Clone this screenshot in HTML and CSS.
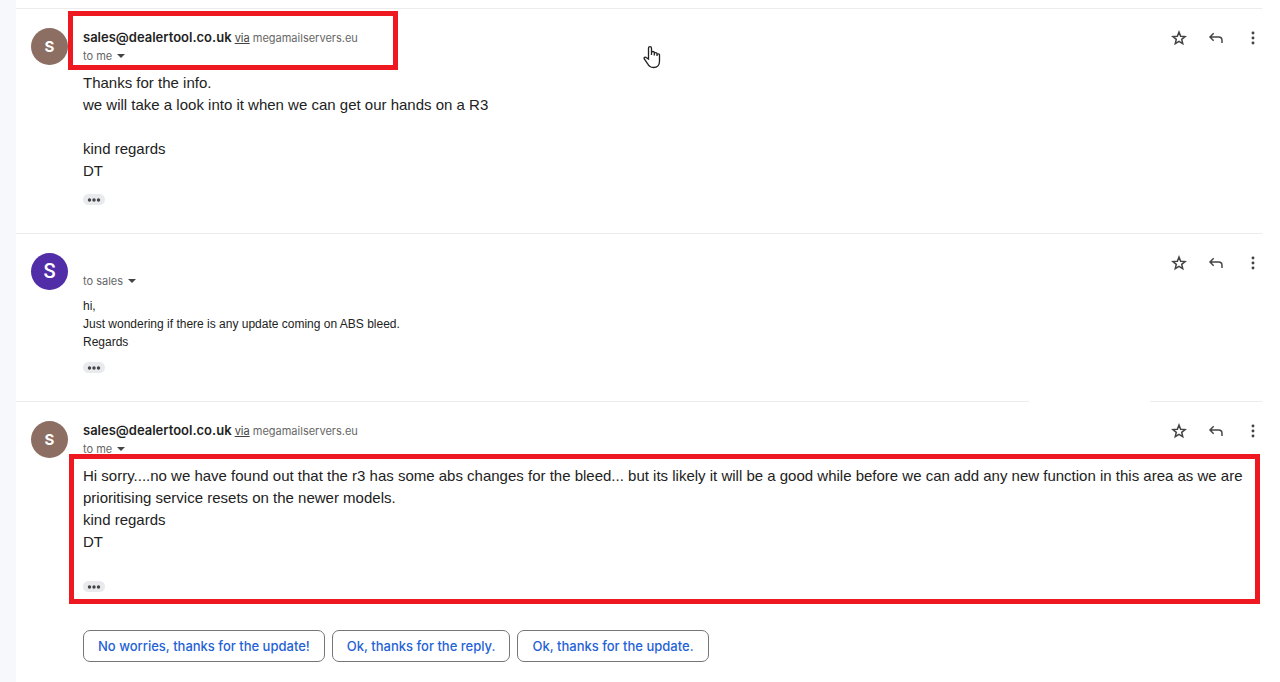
FILE: index.html
```html
<!DOCTYPE html>
<html lang="en">
<head>
  <meta charset="UTF-8" />
  <meta name="viewport" content="width=device-width, initial-scale=1.0"/>
  <title>Mail – sales@dealertool.co.uk</title>
  <link rel="stylesheet" href="styles.css">
</head>
<body>

<!-- Shared icons -->
<svg class="sprite" aria-hidden="true">
  <symbol id="star" viewBox="0 0 24 24">
    <path d="M12 3.2l2.5 6.1 6.6.5-5 4.3 1.5 6.4-5.6-3.4-5.6 3.4 1.5-6.4-5-4.3 6.6-.5z" fill="none" stroke="currentColor" stroke-width="2.3"/>
  </symbol>
  <symbol id="reply" viewBox="0 0 24 24">
    <path d="M8.500 5L3 10.500 8.500 16M3 10.500h13c3 0 5 2 5 5v4" fill="none" stroke="currentColor" stroke-width="2.2"/>
  </symbol>
  <symbol id="more" viewBox="0 0 24 24">
    <circle cx="12" cy="4.5" r="2.2"/><circle cx="12" cy="12" r="2.2"/><circle cx="12" cy="19.5" r="2.2"/>
  </symbol>
  <symbol id="dots" viewBox="0 0 14 4">
    <circle cx="2.500" cy="2" r="1.700"/><circle cx="7" cy="2" r="1.700"/><circle cx="11.500" cy="2" r="1.700"/>
  </symbol>
</svg>

<div class="rail"></div>

<main class="thread">

  <article class="message">
    <div class="avatar">S</div>
    <div class="content">
      <header class="message-header">
        <div class="sender marked">
          <div class="from"><strong>sales@dealertool.co.uk</strong> <a href="#">via</a> <span>megamailservers.eu</span></div>
          <button class="to">to me <i class="caret"></i></button>
        </div>
        <div class="actions">
          <button aria-label="Star"><svg><use href="#star"/></svg></button>
          <button aria-label="Reply"><svg><use href="#reply"/></svg></button>
          <button aria-label="More"><svg><use href="#more"/></svg></button>
        </div>
      </header>
      <div class="body">
        <p>Thanks for the info.<br>we will take a look into it when we can get our hands on a R3<br><br>kind regards<br>DT</p>
        <button class="trimmed" aria-label="Show trimmed content"><svg><use href="#dots"/></svg></button>
      </div>
    </div>
  </article>

  <article class="message">
    <div class="avatar avatar-me">S</div>
    <div class="content">
      <header class="message-header">
        <div class="sender">
          <div class="from"></div>
          <button class="to">to sales <i class="caret"></i></button>
        </div>
        <div class="actions">
          <button aria-label="Star"><svg><use href="#star"/></svg></button>
          <button aria-label="Reply"><svg><use href="#reply"/></svg></button>
          <button aria-label="More"><svg><use href="#more"/></svg></button>
        </div>
      </header>
      <div class="body body-small">
        <p>hi,<br>Just wondering if there is any update coming on ABS bleed.<br>Regards</p>
        <button class="trimmed" aria-label="Show trimmed content"><svg><use href="#dots"/></svg></button>
      </div>
    </div>
  </article>

  <article class="message message-last">
    <div class="avatar">S</div>
    <div class="content">
      <header class="message-header">
        <div class="sender">
          <div class="from"><strong>sales@dealertool.co.uk</strong> <a href="#">via</a> <span>megamailservers.eu</span></div>
          <button class="to">to me <i class="caret"></i></button>
        </div>
        <div class="actions">
          <button aria-label="Star"><svg><use href="#star"/></svg></button>
          <button aria-label="Reply"><svg><use href="#reply"/></svg></button>
          <button aria-label="More"><svg><use href="#more"/></svg></button>
        </div>
      </header>
      <div class="body body-last marked">
        <p>Hi sorry....no we have found out that the r3 has some abs changes for the bleed... but its likely it will be a good while before we can add any new function in this area as we are prioritising service resets on the newer models.<br>kind regards<br>DT</p>
        <button class="trimmed" aria-label="Show trimmed content"><svg><use href="#dots"/></svg></button>
      </div>
      <div class="replies">
        <button>No worries, thanks for the update!</button>
        <button>Ok, thanks for the reply.</button>
        <button>Ok, thanks for the update.</button>
      </div>
    </div>
  </article>

</main>

<!-- Hand pointer -->
<svg class="pointer" viewBox="0 0 18 24" aria-hidden="true">
  <path d="M5.500 14V3.200c0-2.200 3-2.200 3 0V10 7.600c0-1.500 2.800-1.500 2.800 0V10.500 8.600c0-1.400 2.700-1.400 2.700 0V11 9.800c0-1.300 2.500-1.300 2.500 0V16c0 4-2 6.500-6 6.500-3.200 0-4.800-1.500-6-4L1.300 14c-.8-1.700 1-2.500 2.200-1.200z"/>
</svg>

</body>
</html>
```

FILE: styles.css
```css
* {
  box-sizing: border-box;
}

body {
  margin: 0;
  min-height: 100vh;
  display: flex;
  font-family: "Liberation Sans", Arial, sans-serif;
  color: #222;
  background: #fff;
}

button {
  padding: 0;
  border: none;
  background: none;
  font: inherit;
  color: inherit;
  cursor: pointer;
}

svg {
  display: block;
  fill: currentColor;
}

.sprite {
  position: absolute;
  width: 0;
  height: 0;
}

.rail {
  width: 16px;
  flex-shrink: 0;
  background: #f6f8fc;
}

.thread {
  flex: 1;
  min-width: 0;
  padding-top: 8px;
  margin-right: 18px;
}

/* Messages */
.message {
  position: relative;
  display: flex;
  gap: 15px;
  padding: 18px 0 28px 15px;
  border-top: 1px solid #ececee;
}

/* break in the divider line */
.message-last::before {
  content: "";
  position: absolute;
  top: -1px;
  right: 112px;
  width: 121px;
  height: 1px;
  background: #fff;
}

.avatar {
  width: 37px;
  height: 37px;
  margin-top: 1px;
  flex-shrink: 0;
  border-radius: 50%;
  background: #8d6e63;
  color: #fff;
  font: bold 15px/37px Inter, sans-serif;
  text-align: center;
}

.avatar-me {
  background: #512da8;
  font-family: Roboto, sans-serif;
  font-size: 20px;
  font-weight: 500;
}

.content {
  flex: 1;
  min-width: 0;
}

.message-header {
  display: flex;
  justify-content: space-between;
  align-items: flex-start;
  margin-bottom: 7px;
}

.from {
  height: 20px;
  font: 11px/20px Inter, sans-serif;
  color: #666;
}

.from strong {
  font-size: 13px;
  font-weight: 600;
  color: #1f1f1f;
}

.from a {
  color: #444;
}

.to {
  display: flex;
  align-items: center;
  gap: 5px;
  font: 11px/18px Inter, sans-serif;
  color: #666;
}

.caret {
  border: 4px solid transparent;
  border-top-color: #444;
  border-bottom: 0;
}

.actions {
  display: flex;
  gap: 21px;
  padding: 1px 1px 0 0;
  color: #444;
}

.actions button {
  width: 16px;
  height: 20px;
}

.actions svg {
  width: 16px;
  height: 16px;
}

.body p {
  margin: 0 0 12px;
  font-size: 15px;
  line-height: 22px;
}

.body-small p {
  margin-bottom: 11px;
  font-size: 12px;
  line-height: 18px;
}

.body-last p {
  margin-bottom: 28px;
  padding-right: 8px;
}

.trimmed {
  display: flex;
  align-items: center;
  justify-content: center;
  width: 22px;
  height: 11px;
  border-radius: 6px;
  background: #e8eaed;
  color: #444;
}

.trimmed svg {
  width: 14px;
  height: 4px;
}

/* Red marker boxes */
.marked {
  position: relative;
}

.marked::after {
  content: "";
  position: absolute;
  border: 5px solid #ee1821;
  pointer-events: none;
}

.sender.marked::after {
  inset: -16px -40px -5px -15px;
}

.body.marked::after {
  inset: -11px 2px -12px -14px;
}

/* Suggested replies */
.replies {
  display: flex;
  flex-wrap: wrap;
  gap: 7px;
  margin-top: 38px;
}

.replies button {
  height: 32px;
  padding: 0 14px;
  border: 1px solid #747775;
  border-radius: 7px;
  font: 500 13px/20px Inter, sans-serif;
  color: #1f62d6;
}

.pointer {
  position: absolute;
  top: 45px;
  left: 643px;
  width: 18px;
  height: 24px;
  fill: #fff;
  stroke: #222;
  stroke-width: 1.3;
}
```
